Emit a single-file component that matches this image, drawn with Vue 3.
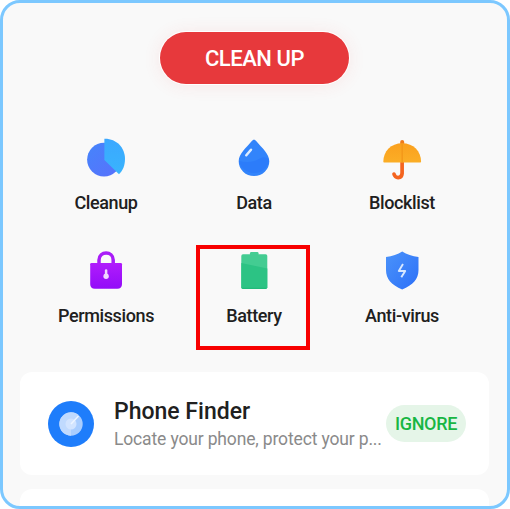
<script setup>
const tools = [
  { id: 'cleanup', label: 'Cleanup' },
  { id: 'data', label: 'Data' },
  { id: 'blocklist', label: 'Blocklist' },
  { id: 'permissions', label: 'Permissions' },
  { id: 'battery', label: 'Battery' },
  { id: 'antivirus', label: 'Anti-virus' },
]
</script>

<template>
  <main class="screen">
    <button class="clean">CLEAN UP</button>

    <nav class="tools">
      <div v-for="t in tools" :key="t.id" class="tool" :class="t.id">
        <svg class="icon" width="44" height="44" viewBox="0 0 44 44">
          <defs>
            <linearGradient id="gPie" x1="0" y1="0" x2="1" y2="1"><stop stop-color="#4585fb" /><stop offset="1" stop-color="#5970fc" /></linearGradient>
            <linearGradient id="gWedge" x1="0" y1="0" x2="0" y2="1"><stop stop-color="#3ba8ff" /><stop offset="1" stop-color="#39b4fd" /></linearGradient>
            <linearGradient id="gUmb" x1="0" y1="0" x2="0" y2="1"><stop stop-color="#faa01e" /><stop offset="1" stop-color="#fbae26" /></linearGradient>
            <linearGradient id="gLock" x1="0" y1="0" x2="0" y2="1"><stop stop-color="#b01cfc" /><stop offset="1" stop-color="#930cf8" /></linearGradient>
            <linearGradient id="gShield" x1="0" y1="0" x2="1" y2="1"><stop stop-color="#4b93fa" /><stop offset="1" stop-color="#2c70f8" /></linearGradient>
          </defs>
          <template v-if="t.id === 'cleanup'">
            <circle cx="20" cy="22.6" r="16.9" fill="url(#gPie)" />
            <path d="M20.4 1.8C32 1.4 41 10.4 41 22C41 28.5 38.8 33.5 35 37.2L20.4 23Z" fill="url(#gWedge)" />
          </template>
          <template v-else-if="t.id === 'data'">
            <path d="M22 2.700C23 2.700 23.700 3.300 24.400 4.200C30 10.800 37.300 17 37.300 24.200A15.300 14.800 0 0 1 6.700 24.200C6.700 17 14 10.800 19.600 4.200C20.300 3.300 21 2.700 22 2.700Z" fill="#3284fb" />
            <path d="M7 24C15 26 22 25 27 22C31 19.500 34 20 37 22.500V24.200A15.300 14.800 0 0 1 7 24Z" fill="#2c7cfa" />
            <path d="M14.300 18.300L19 12.700" stroke="#dcecff" stroke-width="2.500" stroke-linecap="round" />
          </template>
          <template v-else-if="t.id === 'blocklist'">
            <path d="M22.100 24V36.500A4.100 4.500 0 0 1 14 37" fill="none" stroke="#f4641f" stroke-width="3.700" stroke-linecap="round" />
            <path d="M22.200 5V8" stroke="#ef7a1b" stroke-width="4" stroke-linecap="round" />
            <path d="M3.300 24.700C3.300 14.200 11 6.200 22.200 6.200S41.100 14.200 41.100 24.700Q41.100 25.500 40.300 25.500H4.100Q3.300 25.500 3.300 24.700Z" fill="url(#gUmb)" />
            <path d="M22.200 6.500V25.500" stroke="#f4981a" stroke-width="1.500" />
          </template>
          <template v-else-if="t.id === 'permissions'">
            <path d="M15 15V10C15 .7 29.200 .7 29.200 10V15" fill="none" stroke="#a91cf8" stroke-width="3.500" />
            <path d="M7.500 13H36.700Q38 13 38 14.300V34Q38 38.700 33.300 38.700H10.900Q6.200 38.700 6.200 34V14.300Q6.200 13 7.500 13Z" fill="url(#gLock)" />
            <path d="M22.100 20.500V26" stroke="#f0d8ff" stroke-width="2.500" stroke-linecap="round" />
            <circle cx="22.100" cy="26.200" r="2.700" fill="#f0d8ff" />
          </template>
          <template v-else-if="t.id === 'battery'">
            <path d="M18 6V3.200Q18 2 19.200 2H25.300Q26.500 2 26.500 3.200V6Z" fill="#44cd93" />
            <rect x="9.300" y="4.300" width="26" height="34.700" rx="1.700" fill="#43cc92" />
            <path d="M9.300 13L35.300 18.500V37.300Q35.300 39 33.600 39H11Q9.300 39 9.300 37.300Z" fill="#2cc384" />
            <path d="M10.500 38.300H34" stroke="#20b878" stroke-width="1" />
          </template>
          <template v-else>
            <path d="M22.200 1.600Q29 6 38.500 7V20C38.500 29 33 35 22.200 39.500C11.500 35 6 29 6 20V7Q15.500 6 22.200 1.600Z" fill="url(#gShield)" />
            <path d="M23 14L18.800 21H25.200L21.300 27.200" fill="none" stroke="#d7e8ff" stroke-width="1.900" stroke-linejoin="round" />
          </template>
        </svg>
        <span class="label">{{ t.label }}</span>
      </div>
    </nav>

    <section class="card">
      <svg class="finder" width="48" height="48" viewBox="0 0 48 48">
        <circle cx="24" cy="24" r="23" fill="#1e7dfb" />
        <circle cx="24" cy="24" r="11.700" fill="#a9cdfe" />
        <path d="M24 24L31.500 15A11.700 11.700 0 1 0 24 35.700Z" fill="#c0dafe" />
        <circle cx="24" cy="24" r="5.500" fill="#d2e4ff" />
        <path d="M24 24L31.500 16" stroke="#eef5ff" stroke-width="1.500" />
      </svg>
      <div class="copy">
        <div class="title">Phone Finder</div>
        <div class="sub">Locate your phone, protect your p...</div>
      </div>
      <button class="ignore">IGNORE</button>
    </section>
    <section class="card next"></section>
  </main>
</template>

<style>
body {
  background: #fff;
  overflow: hidden;
}
</style>

<style scoped>
.screen {
  box-sizing: border-box;
  width: 510px;
  height: 509px;
  border: 3px solid #7cc8ff;
  border-radius: 20px;
  background: #f9f9f9;
  overflow: hidden;
  display: flex;
  flex-direction: column;
  padding: 29px 18px 0 17px;
  font-family: Roboto, "Liberation Sans", sans-serif;
  color: #202020;
}
button {
  border: 0;
  padding: 0;
  font-family: inherit;
  font-weight: 500;
}
.clean {
  flex: none;
  width: 189px;
  height: 52px;
  margin-left: 140px;
  padding-top: 1px;
  border-radius: 26px;
  background: #e7393c;
  color: #fff;
  font-size: 22px;
  letter-spacing: -0.45px;
  box-shadow: 0 0 0 1px #fff, 0 1px 18px rgba(231, 57, 60, 0.1);
}
.tools {
  flex: none;
  display: grid;
  grid-template-columns: repeat(3, 148px);
  grid-auto-rows: 113px;
  margin: 53px 0 0 12px;
}
.tool {
  position: relative;
  display: flex;
  flex-direction: column;
  align-items: center;
}
.icon,
.finder {
  display: block;
  flex: none;
}
.label {
  margin-top: 11px;
  font-size: 18px;
  letter-spacing: -0.38px;
  line-height: 22px;
  font-weight: 500;
  white-space: nowrap;
}
/* Highlight frame drawn over the selected tool */
.battery::after {
  content: "";
  position: absolute;
  left: 16px;
  top: -5px;
  width: 106px;
  height: 97px;
  border: 4px solid #f80000;
}
.card {
  flex: none;
  box-sizing: border-box;
  height: 103px;
  margin-top: 9px;
  border-radius: 12px;
  background: #fff;
  display: flex;
  align-items: center;
  padding: 0 23px 0 27px;
}
.next {
  margin-top: 14px;
}
.copy {
  margin-left: 19px;
  flex: 1;
  min-width: 0;
  white-space: nowrap;
}
.title {
  padding-top: 1px;
  font-size: 23px;
  line-height: 28px;
  font-weight: 500;
}
.sub {
  font-size: 17.5px;
  letter-spacing: -0.15px;
  line-height: 24px;
  margin-top: 1px;
  color: #8a8a8a;
}
.ignore {
  flex: none;
  width: 80px;
  height: 37px;
  border-radius: 19px;
  background: #e5f5e8;
  color: #18b643;
  font-size: 18px;
  letter-spacing: -0.35px;
}
</style>
